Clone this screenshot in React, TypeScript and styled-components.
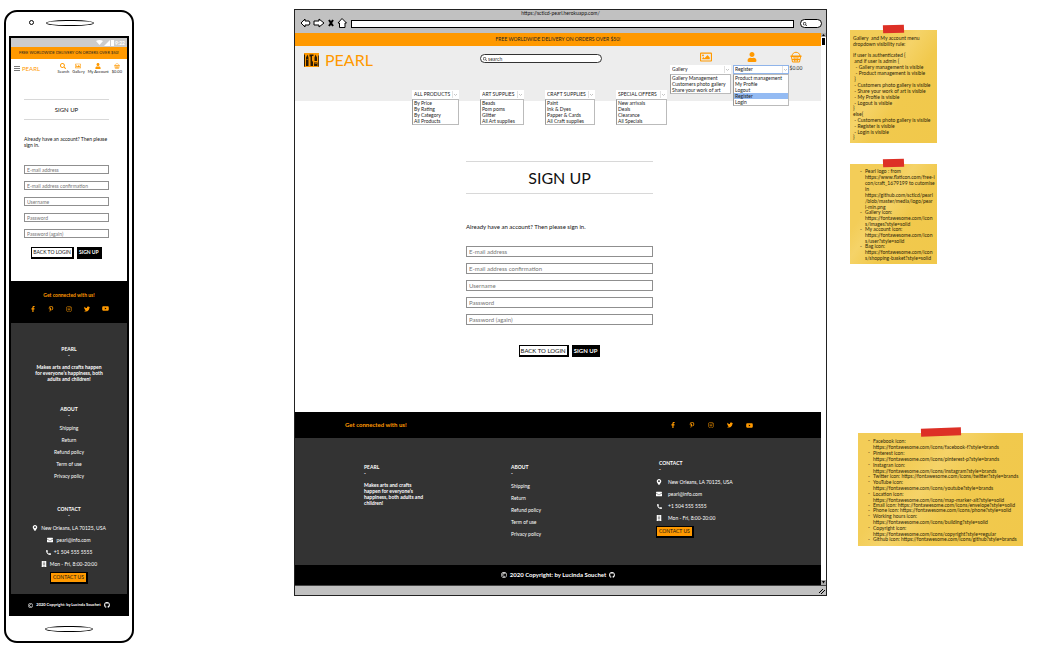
import React from "react";
import styled, { createGlobalStyle, css } from "styled-components";
import {
  FaBuilding,
  FaEnvelope,
  FaFacebookF,
  FaGithub,
  FaInstagram,
  FaMapMarkerAlt,
  FaPhoneAlt,
  FaPinterestP,
  FaRegCopyright,
  FaRegImage,
  FaSearch,
  FaTwitter,
  FaUser,
  FaYoutube,
} from "react-icons/fa";

const ORANGE = "#ff9900";
const DARK = "#333333";

const GlobalStyle = createGlobalStyle`
  *, *::before, *::after { box-sizing: border-box; }
  body {
    margin: 0;
    background: #fff;
    color: #111;
    font: 5px/6px Lato, "Liberation Sans", sans-serif;
  }
  h1, h2, p, ul { margin: 0; padding: 0; font-weight: 400; }
  ul { list-style: none; }
  a { color: inherit; text-decoration: none; }
  svg { display: block; flex: none; }
  button, input, select { font-family: inherit; border-radius: 0; }
`;

const Board = styled.div`
  display: flex;
  align-items: flex-start;
  padding: 9px 24px 18px 4px;
`;

/* ---------- shared pieces ---------- */

const Promo = styled.p<{ $small?: boolean }>`
  background: ${ORANGE};
  color: #222;
  text-align: center;
  white-space: nowrap;
  font-size: ${(p) => (p.$small ? 4 : 5)}px;
  line-height: ${(p) => (p.$small ? 12 : 13)}px;
`;

const Title = styled.h1<{ $small?: boolean }>`
  text-align: center;
  color: #111;
  border: solid #d8d8d8;
  border-width: 1px 0;
  font-size: ${(p) => (p.$small ? 6 : 16)}px;
  line-height: ${(p) => (p.$small ? 19 : 31)}px;
`;

const Form = styled.form<{ $small?: boolean }>`
  display: flex;
  flex-direction: column;
  ${(p) =>
    p.$small
      ? css`
          margin: 25px 18px 0 13px;
          padding-bottom: 22px;
        `
      : css`
          margin: 60px 168px 0 171px;
          padding-bottom: 55px;
        `}
`;

const Hint = styled.p<{ $small?: boolean }>`
  font-size: ${(p) => (p.$small ? 5 : 6)}px;
  line-height: ${(p) => (p.$small ? 6 : 8)}px;
  margin: ${(p) => (p.$small ? "16px 0 17px" : "29px 0 15px")};
`;

const Field = styled.input<{ $small?: boolean }>`
  width: 100%;
  border: 1px solid #8f8f8f;
  background: #fff;
  outline: 0;
  padding: 0 2px;
  font-size: ${(p) => (p.$small ? 5 : 6)}px;
  height: ${(p) => (p.$small ? 9 : 11)}px;
  margin-bottom: ${(p) => (p.$small ? 7 : 6)}px;
  &::placeholder {
    color: #777;
    opacity: 1;
  }
`;

const Actions = styled.div<{ $small?: boolean }>`
  display: flex;
  justify-content: center;
  gap: 3px;
  margin-top: ${(p) => (p.$small ? 2 : 14)}px;
`;

const Button = styled.button<{ $kind: "plain" | "solid" | "accent"; $large?: boolean }>`
  border: 1px solid #000;
  border-right-width: 2px;
  border-bottom-width: 2px;
  padding: 0 ${(p) => (p.$kind === "accent" ? 2 : 1)}px;
  font-size: ${(p) => (p.$large ? 6 : 5)}px;
  line-height: 9px;
  white-space: nowrap;
  cursor: pointer;
  background: ${(p) =>
    p.$kind === "plain" ? "#fff" : p.$kind === "solid" ? "#000" : ORANGE};
  color: ${(p) => (p.$kind === "solid" ? "#fff" : "#111")};
  font-weight: ${(p) => (p.$kind === "solid" ? 700 : 400)};
  ul + & { margin-top: 2px; }
`;

const FIELDS = [
  { label: "E-mail address", type: "email" },
  { label: "E-mail address confirmation", type: "email" },
  { label: "Username", type: "text" },
  { label: "Password", type: "password" },
  { label: "Password (again)", type: "password" },
];

function SignUpForm({ small }: { small?: boolean }) {
  return (
    <Form $small={small} onSubmit={(e) => e.preventDefault()}>
      <Title $small={small}>SIGN UP</Title>
      <Hint $small={small}>Already have an account? Then please sign in.</Hint>
      {FIELDS.map((f) => (
        <Field
          key={f.label}
          $small={small}
          type={f.type}
          placeholder={f.label}
          aria-label={f.label}
        />
      ))}
      <Actions $small={small}>
        <Button type="button" $kind="plain" $large={!small}>BACK TO LOGIN</Button>
        <Button type="submit" $kind="solid" $large={!small}>SIGN UP</Button>
      </Actions>
    </Form>
  );
}

const SocialLinks = styled.div<{ $small?: boolean }>`
  display: flex;
  align-items: center;
  gap: ${(p) => (p.$small ? 12 : 13)}px;
  color: ${ORANGE};
`;

function Social({ small }: { small?: boolean }) {
  return (
    <SocialLinks $small={small}>
      <a href="#facebook" aria-label="Facebook"><FaFacebookF size={6} /></a>
      <a href="#pinterest" aria-label="Pinterest"><FaPinterestP size={6} /></a>
      <a href="#instagram" aria-label="Instagram"><FaInstagram size={6} /></a>
      <a href="#twitter" aria-label="Twitter"><FaTwitter size={6} /></a>
      <a href="#youtube" aria-label="YouTube"><FaYoutube size={7} /></a>
    </SocialLinks>
  );
}

const ABOUT = ["Shipping", "Return", "Refund policy", "Term of use", "Privacy policy"];
const CONTACT = [
  { icon: <FaMapMarkerAlt size={6} />, text: "New Orleans, LA 70125, USA" },
  { icon: <FaEnvelope size={6} />, text: "pearl@info.com" },
  { icon: <FaPhoneAlt size={5} />, text: "+1 504 555 5555" },
  { icon: <FaBuilding size={6} />, text: "Mon - Fri, 8:00-20:00" },
];

function Basket({ size }: { size: number }) {
  return (
    <svg width={size} height={size} viewBox="0 0 24 24" fill="none" stroke="currentColor" strokeWidth="2">
      <path d="M4 10C5 0 19 0 20 10" />
      <path d="M1 9h22v3H1z" fill="currentColor" stroke="none" />
      <path d="M3 12l2 10h14l2-10M8 12l1 9M12 12v9M16 12l-1 9M4 17h16" />
    </svg>
  );
}

/* ---------- phone ---------- */

const Phone = styled.section`
  flex: 0 0 130px;
  margin-top: 1px;
  padding: 0 3px;
  border: 2px solid #000;
  border-radius: 13px;
`;

const Earpiece = styled.div`
  display: flex;
  align-items: center;
  gap: 12px;
  height: 24px;
  padding: 0 0 3px 20px;
`;

const Camera = styled.span`
  width: 5px;
  height: 5px;
  border: 1px solid #000;
  border-radius: 50%;
`;

const Slot = styled.span`
  width: 48px;
  height: 6px;
  border: 1px solid #000;
  border-radius: 50% / 60%;
`;

const Chin = styled.div`
  display: flex;
  justify-content: center;
  align-items: center;
  height: 25px;
`;

const Screen = styled.div`
  border: 2px solid #000;
  border-bottom: 0;
`;

const Status = styled.div`
  display: flex;
  justify-content: flex-end;
  align-items: center;
  gap: 1px;
  height: 9px;
  padding-right: 2px;
  background: #cccccc;
  color: #fff;
  font-size: 5px;
  font-weight: 700;
`;

const PhoneBar = styled.header`
  display: flex;
  align-items: center;
  justify-content: space-between;
  padding: 4px 5px 0 3px;
  color: ${ORANGE};
`;

const PhoneBrand = styled.div`
  display: flex;
  align-items: center;
  gap: 2px;
  font-size: 6px;
`;

const PhoneTools = styled.nav`
  display: flex;
  gap: 3px;
`;

const Tool = styled.a`
  display: flex;
  flex-direction: column;
  align-items: center;
  color: ${ORANGE};
  span {
    color: #222;
    font-size: 4px;
    line-height: 5px;
    white-space: nowrap;
  }
`;

const PhoneSocial = styled.div`
  display: flex;
  flex-direction: column;
  align-items: center;
  gap: 7px;
  height: 42px;
  padding-top: 11px;
  background: #000;
  color: ${ORANGE};
`;

const PhoneFooter = styled.footer`
  display: flex;
  flex-direction: column;
  gap: 24px;
  padding: 23px 20px 10px;
  background: ${DARK};
  color: #fff;
  text-align: center;
  font-weight: 700;
`;

const PhoneHeading = styled.h2`
  font-size: 5px;
  line-height: 6px;
  font-weight: 700;
  margin-bottom: 4px;
`;

const PhoneBlurb = styled.p`
  margin: 6px 2px 0;
  font-weight: 700;
`;

const PhoneLink = styled.li`
  display: flex;
  justify-content: center;
  align-items: center;
  gap: 3px;
  white-space: nowrap;
  line-height: 12px;
`;

const Copyright = styled.div<{ $small?: boolean }>`
  display: flex;
  align-items: center;
  justify-content: center;
  gap: 3px;
  height: ${(p) => (p.$small ? 22 : 20)}px;
  background: #000;
  color: #fff;
  font-weight: 700;
  white-space: nowrap;
  font-size: ${(p) => (p.$small ? 4 : 6)}px;
`;

function PhoneMock() {
  return (
    <Phone>
      <Earpiece><Camera /><Slot /></Earpiece>
      <Screen>
        <Status>
          <svg width="7" height="5" viewBox="0 0 14 10"><path d="M0 2Q7-2 14 2L7 10z" fill="#fff" /></svg>
          <svg width="6" height="6" viewBox="0 0 12 12"><path d="M12 0v12H0z" fill="#fff" /></svg>
          <svg width="3" height="7" viewBox="0 0 3 7"><path d="M0 1h3v6H0z" fill="#fff" /></svg>
          <span>9:22</span>
        </Status>
        <Promo $small>FREE WORLDWIDE DELIVERY ON ORDERS OVER $50!</Promo>
        <PhoneBar>
          <PhoneBrand>
            <svg width="6" height="5" viewBox="0 0 6 5"><path d="M0 0h6v1H0zM0 2h6v1H0zM0 4h6v1H0z" fill="#777" /></svg>
            PEARL
          </PhoneBrand>
          <PhoneTools>
            <Tool href="#search"><FaSearch size={6} /><span>Search</span></Tool>
            <Tool href="#gallery"><FaRegImage size={6} /><span>Gallery</span></Tool>
            <Tool href="#account"><FaUser size={6} /><span>My Account</span></Tool>
            <Tool href="#bag"><Basket size={6} /><span>$0.00</span></Tool>
          </PhoneTools>
        </PhoneBar>
        <SignUpForm small />
        <PhoneSocial>
          <p><b>Get connected with us!</b></p>
          <Social small />
        </PhoneSocial>
        <PhoneFooter>
          <section>
            <PhoneHeading>PEARL<br />-</PhoneHeading>
            <PhoneBlurb>Makes arts and crafts happen for everyone’s happiness, both adults and children!</PhoneBlurb>
          </section>
          <section>
            <PhoneHeading>ABOUT<br />-</PhoneHeading>
            <ul>
              {ABOUT.map((t) => <PhoneLink key={t}><a href="#about">{t}</a></PhoneLink>)}
            </ul>
          </section>
          <section>
            <PhoneHeading>CONTACT<br />-</PhoneHeading>
            <ul>
              {CONTACT.map((c) => <PhoneLink key={c.text}>{c.icon}{c.text}</PhoneLink>)}
            </ul>
            <Button type="button" $kind="accent">CONTACT US</Button>
          </section>
        </PhoneFooter>
        <Copyright $small>
          <FaRegCopyright size={5} />2020 Copyright: by Lucinda Souchet<FaGithub size={6} />
        </Copyright>
      </Screen>
      <Chin><Slot /></Chin>
    </Phone>
  );
}

/* ---------- browser ---------- */

const Window = styled.section`
  flex: 1 1 auto;
  min-width: 0;
  margin-left: 160px;
  border: 1px solid #222;
  background: #fff;
`;

const Chrome = styled.div`
  background: #c1c1c1;
`;

const PageTitle = styled.p`
  text-align: center;
  line-height: 7px;
`;

const Toolbar = styled.div`
  display: flex;
  align-items: center;
  gap: 3px;
  height: 16px;
  padding: 0 4px 5px 5px;
`;

const Address = styled.input`
  flex: 1;
  min-width: 0;
  height: 8px;
  margin: 2px 3px 0 0;
  padding: 0 3px;
  border: 1px solid #000;
  background: #fff;
  font-size: 5px;
`;

const ChromeSearch = styled.div`
  display: flex;
  align-items: center;
  width: 22px;
  height: 9px;
  margin-top: 2px;
  padding-left: 2px;
  border: 1px solid #000;
  border-radius: 5px;
  background: #fff;
`;

const Viewport = styled.div`
  display: grid;
  grid-template-columns: minmax(0, 1fr) 5px;
`;

const Scrollbar = styled.div`
  display: flex;
  flex-direction: column;
  justify-content: space-between;
`;

const SiteHeader = styled.header`
  height: 55px;
  background: #ededed;
`;

const HeaderRow = styled.div`
  display: grid;
  grid-template-columns: 185fr 190fr 151fr;
  height: 44px;
  padding-top: 5px;
`;

const Brand = styled.div`
  display: flex;
  align-items: center;
  align-self: start;
  gap: 6px;
  margin-top: 2px;
  padding-left: 9px;
  color: ${ORANGE};
  font-size: 16px;
  line-height: 14px;
`;

const SearchBox = styled.label`
  display: flex;
  align-items: center;
  align-self: start;
  gap: 1px;
  width: 122px;
  height: 9px;
  margin-top: 3px;
  padding: 0 2px;
  border: 1px solid #333;
  border-radius: 5px;
  background: #fff;
  color: #444;
  input {
    flex: 1;
    min-width: 0;
    padding: 0;
    border: 0;
    outline: 0;
    background: none;
    font-size: 5px;
    line-height: 6px;
  }
  input::placeholder { color: #333; opacity: 1; }
`;

const Account = styled.div`
  display: flex;
  gap: 2px;
`;

const AccountItem = styled.div<{ $width: number }>`
  display: flex;
  flex-direction: column;
  align-items: center;
  gap: 2px;
  width: ${(p) => p.$width}px;
  color: ${ORANGE};
`;

const AccountIcon = styled.div<{ $before?: number; $after?: number }>`
  display: flex;
  align-items: center;
  height: 12px;
  padding-left: ${(p) => p.$before ?? 0}px;
  padding-right: ${(p) => p.$after ?? 0}px;
`;

const Price = styled.span`
  color: #333;
  line-height: 6px;
`;

const Menu = styled.div<{ $width?: number }>`
  position: relative;
  width: ${(p) => (p.$width ? p.$width + "px" : "100%")};
`;

const MenuSelect = styled.select<{ $active?: boolean }>`
  display: block;
  appearance: none;
  width: 100%;
  height: 9px;
  padding: 0 1px;
  border: 1px solid ${(p) => (p.$active ? "#8fb4ea" : "#fff")};
  outline: 0;
  background: #fff;
  color: #222;
  font-size: 5px;
  line-height: 7px;
`;

const Caret = styled.svg`
  position: absolute;
  top: 1px;
  right: 1px;
  pointer-events: none;
`;

const MenuList = styled.ul`
  position: absolute;
  top: 9px;
  left: 0;
  right: 0;
  border: 1px solid #bbb;
  border-left-color: #999;
  background: #fff;
  color: #222;
`;

const MenuItem = styled.li<{ $on?: boolean }>`
  padding-left: 1px;
  white-space: nowrap;
  line-height: 6px;
  background: ${(p) => (p.$on ? "#94bbf3" : "transparent")};
`;

const Nav = styled.nav`
  display: flex;
  gap: 21px;
  padding-left: 117px;
`;

function Dropdown(props: { title: string; items: string[]; width?: number; on?: string }) {
  return (
    <Menu $width={props.width}>
      <MenuSelect aria-label={props.title} $active={!!props.on} defaultValue={props.title}>
        <option>{props.title}</option>
      </MenuSelect>
      <Caret width="6" height="7" viewBox="0 0 6 7" fill="none" stroke="#c4c4c4">
        <path d="M.5 0v7" stroke="#e2e2e2" />
        <path d="M2 3l1.500 1.500L5 3" />
      </Caret>
      <MenuList>
        {props.items.map((t) => (
          <MenuItem key={t} $on={t === props.on}>{t}</MenuItem>
        ))}
      </MenuList>
    </Menu>
  );
}

const SocialStrip = styled.div`
  display: flex;
  align-items: center;
  justify-content: space-between;
  height: 26px;
  padding: 0 68px 0 50px;
  background: #000;
  color: ${ORANGE};
  p { font-weight: 700; font-size: 6px; }
`;

const SiteFooter = styled.footer`
  display: grid;
  grid-template-columns: 147fr 145fr 165fr;
  min-height: 127px;
  padding: 22px 0 0 69px;
  background: ${DARK};
  color: #fff;
  font-weight: 700;
`;

const FooterColumn = styled.section<{ $raised?: boolean }>`
  padding-top: ${(p) => (p.$raised ? 0 : 4)}px;
`;

const FooterHeading = styled.h2<{ $inset?: boolean }>`
  padding-left: ${(p) => (p.$inset ? 3 : 0)}px;
  margin-bottom: 4px;
  font-size: 5px;
  line-height: 6px;
  font-weight: 700;
`;

const Blurb = styled.p`
  max-width: 60px;
  margin-top: 6px;
  font-weight: 700;
`;

const FooterLink = styled.li`
  line-height: 12px;
`;

const ContactLine = styled.li`
  display: grid;
  grid-template-columns: 6px 1fr;
  align-items: center;
  justify-items: start;
  gap: 6px;
  line-height: 12px;
  svg { justify-self: center; }
`;

const StatusBar = styled.div`
  display: flex;
  justify-content: flex-end;
  align-items: center;
  height: 10px;
  border-top: 1px solid #444;
  background: #c1c1c1;
`;

function Logo() {
  return (
    <svg width="15" height="14" viewBox="0 0 30 28">
      <path d="M0 0h30v28H0z" fill={ORANGE} />
      <path d="M0 3h2v24H0zM4 9l3-6 2 6v17H4zM11 3h8v3h-3v9l2 3v8h-5V7h-2zM21 9l2-6 3 6v7h-5zM20 19h7v7h-7z" fill="#2a1a05" />
      <path d="M21 21h5v1h-5zM5 13h3v1H5z" fill={ORANGE} />
      <path d="M28 5h2v22h-2z" fill="#5a3807" />
    </svg>
  );
}

function BrowserMock() {
  return (
    <Window>
      <Chrome>
        <PageTitle>https://sctlcd-pearl.herokuapp.com/</PageTitle>
        <Toolbar>
          <svg width="48" height="12" viewBox="0 0 48 12" fill="#fff" stroke="#000" strokeLinejoin="round">
            <path d="M1 6l4-4v2h4l1 2-1 2H5v2z" />
            <path d="M24 6l-5-4v2h-5v4h5v2z" />
            <path d="M29 3l4 6M33 3l-4 6" strokeWidth="2" />
            <path d="M46.500 6L42 1.500 38 6h1.500v4.500h5.500V6z" />
          </svg>
          <Address aria-label="Address" />
          <ChromeSearch><FaSearch size={4} /></ChromeSearch>
        </Toolbar>
      </Chrome>
      <Viewport>
        <div>
          <Promo>FREE WORLDWIDE DELIVERY ON ORDERS OVER $50!</Promo>
          <SiteHeader>
            <HeaderRow>
              <Brand><Logo />PEARL</Brand>
              <SearchBox>
                <FaSearch size={4} />
                <input type="search" placeholder="search" aria-label="Search" />
              </SearchBox>
              <Account>
                <AccountItem $width={61}>
                  <AccountIcon $before={11}><FaRegImage size={12} /></AccountIcon>
                  <Dropdown
                    title="Gallery"
                    items={["Gallery Management", "Customers photo gallery", "Share your work of art"]}
                  />
                </AccountItem>
                <AccountItem $width={56}>
                  <AccountIcon $after={18}><FaUser size={10} /></AccountIcon>
                  <Dropdown
                    title="Register"
                    on="Register"
                    items={["Product management", "My Profile", "Logout", "Register", "Login"]}
                  />
                </AccountItem>
                <AccountItem $width={10}>
                  <AccountIcon><Basket size={12} /></AccountIcon>
                  <Price>$0.00</Price>
                </AccountItem>
              </Account>
            </HeaderRow>
            <Nav>
              <Dropdown width={47} title="ALL PRODUCTS" items={["By Price", "By Rating", "By Category", "All Products"]} />
              <Dropdown width={44} title="ART SUPPLIES" items={["Beads", "Pom poms", "Glitter", "All Art supplies"]} />
              <Dropdown width={50} title="CRAFT SUPPLIES" items={["Paint", "Ink & Dyes", "Papper & Cards", "All Craft supplies"]} />
              <Dropdown width={51} title="SPECIAL OFFERS" items={["New arrivals", "Deals", "Clearance", "All Specials"]} />
            </Nav>
          </SiteHeader>
          <SignUpForm />
          <SocialStrip>
            <p>Get connected with us!</p>
            <Social />
          </SocialStrip>
          <SiteFooter>
            <FooterColumn>
              <FooterHeading>PEARL<br />-</FooterHeading>
              <Blurb>Makes arts and crafts happen for everyone’s happiness, both adults and children!</Blurb>
            </FooterColumn>
            <FooterColumn>
              <FooterHeading>ABOUT<br />-</FooterHeading>
              <ul>{ABOUT.map((t) => <FooterLink key={t}><a href="#about">{t}</a></FooterLink>)}</ul>
            </FooterColumn>
            <FooterColumn $raised>
              <FooterHeading $inset>CONTACT<br />-</FooterHeading>
              <ul>{CONTACT.map((c) => <ContactLine key={c.text}>{c.icon}{c.text}</ContactLine>)}</ul>
              <Button type="button" $kind="accent">CONTACT US</Button>
            </FooterColumn>
          </SiteFooter>
          <Copyright>
            <FaRegCopyright size={6} />2020 Copyright: by Lucinda Souchet<FaGithub size={6} />
          </Copyright>
        </div>
        <Scrollbar>
          <svg width="5" height="12" viewBox="0 0 5 12">
            <path d="M0 0h5v4H0z" fill="#aaa" /><path d="M1 3l1.500-2L4 3zM1 5h3v7H1z" fill="#000" />
          </svg>
          <svg width="5" height="5" viewBox="0 0 5 5">
            <path d="M0 0h5v5H0z" fill="#aaa" /><path d="M1 1l1.500 2.500L4 1z" fill="#000" />
          </svg>
        </Scrollbar>
      </Viewport>
      <StatusBar>
        <svg width="8" height="8" viewBox="0 0 8 8" stroke="#000"><path d="M1 6l4-4M3 7l4-4" /></svg>
      </StatusBar>
    </Window>
  );
}

/* ---------- sticky notes ---------- */

const Notes = styled.aside`
  flex: 0 0 173px;
  margin-left: 23px;
  padding-top: 21px;
`;

const Note = styled.section<{ $wide?: boolean; $tall?: boolean; $above?: number }>`
  position: relative;
  width: ${(p) => (p.$wide ? 165 : 87)}px;
  margin-left: ${(p) => (p.$wide ? 8 : 0)}px;
  margin-top: ${(p) => p.$above ?? 0}px;
  min-height: ${(p) => (p.$tall ? 113 : 100)}px;
  padding: 5px 3px 3px;
  background: linear-gradient(125deg, #f3cd58 0 30%, #f5d368 42%, #f1c94d 60%, #f1c84b);
  color: #2b2408;
  white-space: pre;
  &::before {
    content: "";
    position: absolute;
    top: -5px;
    left: 38%;
    width: 24%;
    height: 8px;
    background: #dd3026;
    transform: rotate(-2deg);
  }
`;

const NoteLine = styled.p<{ $short?: boolean }>`
  line-height: ${(p) => (p.$short ? 5 : 6)}px;
  min-height: 5px;
`;

const NoteItem = styled.li`
  position: relative;
  margin-left: 12px;
  &::before {
    content: "-";
    position: absolute;
    top: 0;
    left: -5px;
    line-height: 5px;
  }
`;

const RULES = [
  "Gallery  and My account menu",
  "dropdown visibility rule:",
  "",
  "if user is authenticated {",
  " and if user is admin {",
  "  - Gallery management is visible",
  "  - Product management is visible",
  " }",
  " - Customers photo gallery is visible",
  " - Share your work of art is visible",
  " - My Profile is visible",
  " - Logout is visible",
  "}",
  "else{",
  " - Customers photo gallery is visible",
  " - Register is visible",
  " - Login is visible",
  "}",
];

const ASSETS = [
  "Pearl logo : from\nhttps://www.flaticon.com/free-i\ncon/craft_1679199 to cutomise\nin\nhttps://github.com/sctlcd/pearl\n/blob/master/media/logo/pear\nl-min.png",
  "Gallery icon:\nhttps://fontawesome.com/icon\ns/images?style=solid",
  "My account icon:\nhttps://fontawesome.com/icon\ns/user?style=solid",
  "Bag icon:\nhttps://fontawesome.com/icon\ns/shopping-basket?style=solid",
];

const ICONS = [
  "Facebook icon:\nhttps://fontawesome.com/icons/facebook-f?style=brands",
  "Pinterest icon:\nhttps://fontawesome.com/icons/pinterest-p?style=brands",
  "Instagran icon:\nhttps://fontawesome.com/icons/instagram?style=brands",
  "Twitter icon: https://fontawesome.com/icons/twitter?style=brands",
  "YouTube icon:\nhttps://fontawesome.com/icons/youtube?style=brands",
  "Location icon:\nhttps://fontawesome.com/icons/map-marker-alt?style=solid",
  "Email icon: https://fontawesome.com/icons/envelope?style=solid",
  "Phone icon: https://fontawesome.com/icons/phone?style=solid",
  "Working hours icon:\nhttps://fontawesome.com/icons/building?style=solid",
  "Copyright icon:\nhttps://fontawesome.com/icons/copyright?style=regular",
  "Github icon: https://fontawesome.com/icons/github?style=brands",
];

function NoteList({ items, loose }: { items: string[]; loose?: boolean }) {
  return (
    <ul>
      {items.map((item) => {
        const lines = item.split("\n");
        return (
          <NoteItem key={item}>
            {lines.map((line, i) => (
              <NoteLine key={i} $short={loose ? lines.length === 1 : i === 0}>{line}</NoteLine>
            ))}
          </NoteItem>
        );
      })}
    </ul>
  );
}

function NotesColumn() {
  return (
    <Notes>
      <Note $tall>
        {RULES.map((t, i) => (
          <NoteLine key={i} $short={t === "}"}>{t}</NoteLine>
        ))}
      </Note>
      <Note $above={21}><NoteList items={ASSETS} /></Note>
      <Note $wide $tall $above={169}><NoteList items={ICONS} loose /></Note>
    </Notes>
  );
}

export default function App() {
  return (
    <>
      <GlobalStyle />
      <Board>
        <PhoneMock />
        <BrowserMock />
        <NotesColumn />
      </Board>
    </>
  );
}
